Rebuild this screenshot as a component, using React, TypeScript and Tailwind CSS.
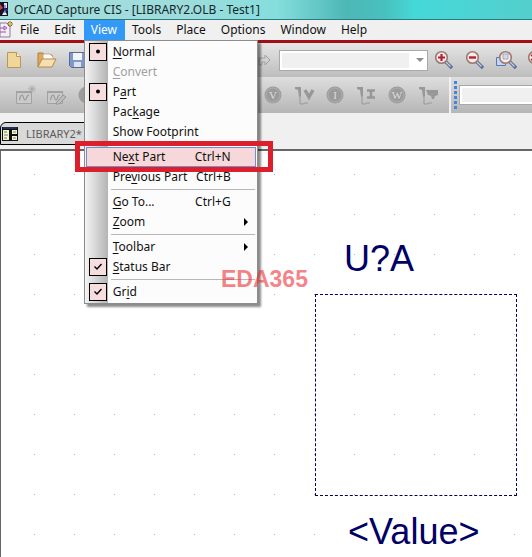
import { Fragment, ReactNode } from "react";

type MenuEntry = {
    before?: string;
    hot: string;
    after: string;
    keys?: string;
    mark?: "dot" | "check";
    disabled?: boolean;
    active?: boolean;
    arrow?: boolean;
};

const groups: MenuEntry[][] = [
    [
        { hot: "N", after: "ormal", mark: "dot" },
        { hot: "C", after: "onvert", disabled: true },
        { before: "P", hot: "a", after: "rt", mark: "dot" },
        { before: "Pac", hot: "k", after: "age" },
        { hot: "", after: "Show Footprint" },
    ],
    [
        { before: "Ne", hot: "x", after: "t Part", keys: "Ctrl+N", active: true },
        { before: "Pre", hot: "v", after: "ious Part", keys: "Ctrl+B" },
    ],
    [
        { hot: "G", after: "o To...", keys: "Ctrl+G" },
        { hot: "Z", after: "oom", arrow: true },
    ],
    [
        { hot: "T", after: "oolbar", arrow: true },
        { hot: "S", after: "tatus Bar", mark: "check" },
    ],
    [{ before: "Gr", hot: "i", after: "d", mark: "check" }],
];

const Mark = ({ kind }: { kind: "dot" | "check" }) => (
    <span className="flex size-[18px] items-center justify-center border border-black bg-[#f6dede]">
        <svg width="10" height="10" viewBox="0 0 10 10" aria-hidden="true">
            {kind === "dot" ? (
                <circle cx="5" cy="4.5" r="2" />
            ) : (
                <path d="M1.5 4.5l2.5 2.5 4.5-5" fill="none" stroke="#000" strokeWidth="1.4" />
            )}
        </svg>
    </span>
);

const MenuRow = ({ item }: { item: MenuEntry }) => (
    <button
        type="button"
        disabled={item.disabled}
        className={`relative flex h-5 w-full items-center text-left ${item.disabled ? "text-[#a0a0a0]" : "text-[#111]"}`}
    >
        {item.active && <span className="absolute inset-x-px inset-y-0 border border-[#6f8fd0] bg-[#f6d8da]" />}
        <span className="flex w-7 shrink-0 pl-1">{item.mark && <Mark kind={item.mark} />}</span>
        <span className="relative grow whitespace-nowrap">
            {item.before}
            <u className="underline-offset-2">{item.hot}</u>
            {item.after}
        </span>
        {item.keys && <span className="relative pr-[26px] whitespace-nowrap">{item.keys}</span>}
        {item.arrow && (
            <svg className="mr-2" width="6" height="8" viewBox="0 0 6 8" aria-hidden="true">
                <path d="M1 0l4 4-4 4z" />
            </svg>
        )}
    </button>
);

const ViewMenu = () => (
    <div className="absolute top-5 left-0 z-10 w-[174px] border border-[#8c8c8c] bg-[linear-gradient(to_right,#f4f4f4_0,#b4b4b4_23px,#fcfcfc_23px)] py-px shadow-[3px_3px_2px_rgba(0,0,0,0.45)]">
        {groups.map((group, i) => (
            <Fragment key={i}>
                {i > 0 && <hr className="my-[2px] mr-[2px] ml-[26px] border-[#b8b8b8]" />}
                {group.map((item) => (
                    <MenuRow key={item.after} item={item} />
                ))}
            </Fragment>
        ))}
        {/* red marker around the Next Part row */}
        <div className="pointer-events-none absolute top-[100px] -left-[10px] h-[31px] w-[198px] border-5 border-[#dd1f2b]" />
    </div>
);

const ToolButton = ({ label, children }: { label: string; children: ReactNode }) => (
    <button type="button" aria-label={label} className="flex w-[31px] shrink-0 items-center justify-center">
        <svg width="22" height="22" viewBox="0 0 22 22" fill="none" aria-hidden="true">
            {children}
        </svg>
    </button>
);

const Lens = ({ children }: { children?: ReactNode }) => (
    <>
        <path d="M12.500 12.500l6.500 6.500" stroke="#5d6f93" strokeWidth="3.4" />
        <path d="M12.500 12.500l5 5" stroke="#c3cfe6" strokeWidth="1.2" />
        <circle cx="8.500" cy="8.500" r="5.800" fill="#f8ebe8" stroke="#9a7a70" strokeWidth="1.600" />
        {children}
    </>
);

const Probe = () => (
    <>
        <path d="M2 3h6v9l-2 1-1-7-3-1z" fill="#989898" />
        <path d="M7 12v8h3l2-1h3" stroke="#989898" />
    </>
);

const Coin = ({ letter }: { letter: string }) => (
    <>
        <circle cx="11" cy="11" r="8.500" fill="#9b9b9b" />
        <circle cx="11" cy="11" r="7" stroke="#b4b4b4" strokeWidth="0.800" />
        <text x="11" y="15" textAnchor="middle" fill="#dedede" className="font-['Liberation_Serif',serif] text-[11px]">
            {letter}
        </text>
    </>
);

const Scope = () => (
    <>
        <path d="M2.500 7.500h15v12h-15z" fill="#cacaca" stroke="#a2a2a2" />
        <path d="M2 8h16" stroke="#a2a2a2" strokeWidth="2" />
        <path d="M5 16c1 0 1-5 3-5s1 5 3 5 1-5 4-5" stroke="#989898" strokeWidth="1.200" />
    </>
);

const TitleBar = () => (
    <header className="flex h-5 items-center overflow-hidden border-b border-[#2e7880] bg-[linear-gradient(to_right,#a5dedd_0,#9edcdc_35%,#84dedc_52%,#4db8b6_65%,#48c0bd_72%,#45d8d8_78%,#53cfcd_100%)]">
        <svg width="9" height="20" viewBox="0 0 9 20" className="shrink-0" aria-hidden="true">
            <path d="M0 2h8v14H0z" fill="#141425" />
            <path d="M4 3h3v5H4z" fill="#e6e8f0" />
            <path d="M0 4l3 4-3 2" fill="#d53a4c" />
            <path d="M2 15l3-5 2 5" fill="#e8ebf4" />
            <path d="M5 5v8M6 10h2" stroke="#334bbb" />
        </svg>
        <h1 className="pl-[5px] leading-4 whitespace-nowrap text-[#14282a]">OrCAD Capture CIS - [LIBRARY2.OLB - Test1]</h1>
    </header>
);

const MenuBar = () => (
    <nav className="flex h-5 bg-[#f0f0f0]">
        <svg width="13" height="20" viewBox="0 0 13 20" className="shrink-0" aria-hidden="true">
            <path d="M0 3h7l3 3v11H0z" fill="#f3eef6" stroke="#8c7da0" />
            <path d="M0 8h4M4 6v4l3-2zM0 12h6" fill="none" stroke="#a44fae" />
            <path d="M10 1v6M7 4h6M8 2l4 4M12 2L8 6" stroke="#4a3a20" strokeWidth="0.800" />
            <circle cx="10" cy="4" r="1.500" fill="#f2c230" />
        </svg>
        {["File", "Edit", "View", "Tools", "Place", "Options", "Window", "Help"].map((name) => (
            <div key={name} className="relative">
                <button
                    type="button"
                    className={`flex h-5 items-center pr-2 pl-[7px] ${name === "View" ? "bg-[#3399f8] text-white" : "text-[#111]"}`}
                >
                    {name}
                </button>
                {name === "View" && <ViewMenu />}
            </div>
        ))}
    </nav>
);

const MainToolbar = () => (
    <div className="flex h-[34px] items-center overflow-hidden bg-linear-to-b from-[#e6e6e6] to-[#bdbdbd]">
        <ToolButton label="New">
            <path d="M2.500 3.500h9l4 4v11h-13z" fill="#f0d698" stroke="#b8985c" />
            <path d="M11.500 3.500v4h4" fill="#fff3d0" stroke="#b8985c" />
        </ToolButton>
        <ToolButton label="Open">
            <path d="M2 18V4h5l2 2h7v4" fill="#dfa95d" stroke="#b57b35" />
            <path d="M7 5h7l3 3v5H7z" fill="#fff" stroke="#c29a68" strokeWidth="0.800" />
            <path d="M2 18l4-8h14l-4 8z" fill="#f7dfb4" stroke="#b98848" />
        </ToolButton>
        <ToolButton label="Save">
            <path d="M2.500 3.500h15v15h-13l-2-2z" fill="#8098c8" stroke="#56699c" />
            <path d="M6 4h9v7H6z" fill="#f2f5fb" />
            <path d="M7 13h7v5H7z" fill="#dbe2f0" />
        </ToolButton>
        <div className="w-[156px] shrink-0" />
        <ToolButton label="Redo">
            <path d="M5 16V9h6V6l5 5-5 5v-3H8v3z" stroke="#a2a2a2" />
        </ToolButton>
        <div className="relative -ml-px flex shrink-0">
            <select
                aria-label="Part name"
                className="h-[21px] w-[149px] appearance-none border border-[#a9a9a9] bg-[#f0f0f0] shadow-[inset_0_0_0_2px_#fff]"
            />
            <span className="pointer-events-none absolute top-px right-px flex h-[19px] w-[18px] items-center justify-end bg-white pr-[3px]">
                <svg width="8" height="4" viewBox="0 0 8 4" aria-hidden="true">
                    <path d="M0 0h8L4 4z" fill="#8e8e8e" />
                </svg>
            </span>
        </div>
        <ToolButton label="Zoom in">
            <Lens>
                <path d="M8.500 5v7M5 8.500h7" stroke="#b32038" strokeWidth="2.200" />
            </Lens>
        </ToolButton>
        <ToolButton label="Zoom out">
            <Lens>
                <path d="M5 8.500h7" stroke="#b32038" strokeWidth="2.400" />
            </Lens>
        </ToolButton>
        <ToolButton label="Zoom to region">
            <path d="M1.500 8.500h9v8h-9z" fill="#c6d6f4" stroke="#5877b5" />
            <g transform="translate(2 0)">
                <Lens />
                <path d="M6 5h5v5H6z" fill="#d3dbea" stroke="#8f9dbb" strokeWidth="0.800" />
            </g>
        </ToolButton>
        <ToolButton label="Zoom to all">
            <Lens>
                <path d="M5 6l7 5M12 6l-7 5" stroke="#b32038" strokeWidth="1.600" />
            </Lens>
        </ToolButton>
    </div>
);

const ProbeToolbar = () => (
    <div className="flex h-9 items-center overflow-hidden bg-linear-to-b from-[#dedede] to-[#b6b6b6]">
        <div className="flex shrink-0 pl-[9px]">
            <ToolButton label="New simulation">
                <Scope />
                <path d="M18 1v8M14 5h8M15 2l6 6M21 2l-6 6" stroke="#a2a2a2" strokeWidth="0.800" />
            </ToolButton>
            <ToolButton label="Edit simulation">
                <Scope />
                <path d="M11 19l7-8 3 2-7 7h-3z" fill="#bdbdbd" stroke="#969696" />
            </ToolButton>
            <ToolButton label="Run">
                <circle cx="11" cy="11" r="8.500" fill="#9b9b9b" />
            </ToolButton>
        </div>
        <div className="w-[155px] shrink-0" />
        <ToolButton label="Voltage bias">
            <Coin letter="V" />
        </ToolButton>
        <ToolButton label="Voltage marker">
            <Probe />
            <path d="M12 6l4 7 4-7" stroke="#989898" strokeWidth="3.400" />
        </ToolButton>
        <ToolButton label="Current bias">
            <Coin letter="I" />
        </ToolButton>
        <ToolButton label="Current marker">
            <Probe />
            <path d="M12 6.500h8M12 13.500h8M16 6v8" stroke="#989898" strokeWidth="2.600" />
        </ToolButton>
        <ToolButton label="Power bias">
            <Coin letter="W" />
        </ToolButton>
        <ToolButton label="Power marker">
            <Probe />
            <path d="M9 6h12v5l-3 1-1 3h-2l-1-3-3-1z" fill="#989898" />
        </ToolButton>
        <div className="ml-[6px] flex h-full grow items-center border-l-2 border-[#f0f0f0] pl-[3px]">
            <span className="h-7 w-[3px] shrink-0 bg-[repeating-linear-gradient(to_bottom,#3f86dc_0,#3f86dc_3px,transparent_3px,transparent_5px)]" />
            <input
                aria-label="Simulation profile"
                className="ml-[2px] h-5 min-w-0 grow border border-r-0 border-[#a9a9a9] bg-[#f0f0f0] shadow-[inset_0_0_0_2px_#fff]"
            />
        </div>
    </div>
);

const TabStrip = () => (
    <div className="flex h-9 items-start bg-[#f0f0f0] pt-[9px]">
        <button
            type="button"
            className="flex h-[23px] items-center gap-2 rounded-tl-md border border-black bg-[#d9d9d9] pr-6 pl-px text-[11px] text-[#5c5c5c]"
        >
            <svg width="16" height="14" viewBox="0 0 16 14" aria-hidden="true">
                <path d="M0 0h16v14H0z" fill="#101010" />
                <path d="M1 3h6v10H1zM10 3h5v4h-5zM10 9h5v4h-5z" fill="#f3f2d8" />
                <path d="M2 5h3M2 8h4M2 11h3M11 5h3M11 11h3" stroke="#74804a" />
                <path d="M1 1h14" stroke="#34509c" />
            </svg>
            LIBRARY2*
        </button>
    </div>
);

// the grid dot is the top left pixel of each 40px tile
const Canvas = () => (
    <main className="relative h-[408px] overflow-hidden border-t-2 border-l border-[#666] bg-white bg-[conic-gradient(from_0deg_at_1px_1px,transparent_270deg,#b4b4b4_0)] bg-size-[40px_40px] bg-position-[33px_23px] font-['Liberation_Sans',Arial,sans-serif] text-4xl leading-10 text-[#000066]">
        <p className="absolute top-[88px] left-[343px] leading-10">U?A</p>
        <div className="absolute top-[143px] left-[314px] size-[202px] border border-dashed border-[#000060]" />
        <p className="absolute top-[361px] left-[347px] leading-10">&lt;Value&gt;</p>
    </main>
);

export default function App() {
    return (
        <div className="relative overflow-hidden bg-[#f0f0f0] font-['Noto_Sans',sans-serif] text-[12px] leading-5">
            <TitleBar />
            <MenuBar />
            <div className="h-[3px] bg-[#a10f17]" />
            <MainToolbar />
            <ProbeToolbar />
            <TabStrip />
            <Canvas />
            {/* watermark */}
            <span className="absolute top-[267px] left-[221px] z-20 font-['Liberation_Sans',Arial,sans-serif] text-[23px] leading-6 font-bold text-[#ee3038]/60">
                EDA365
            </span>
        </div>
    );
}
